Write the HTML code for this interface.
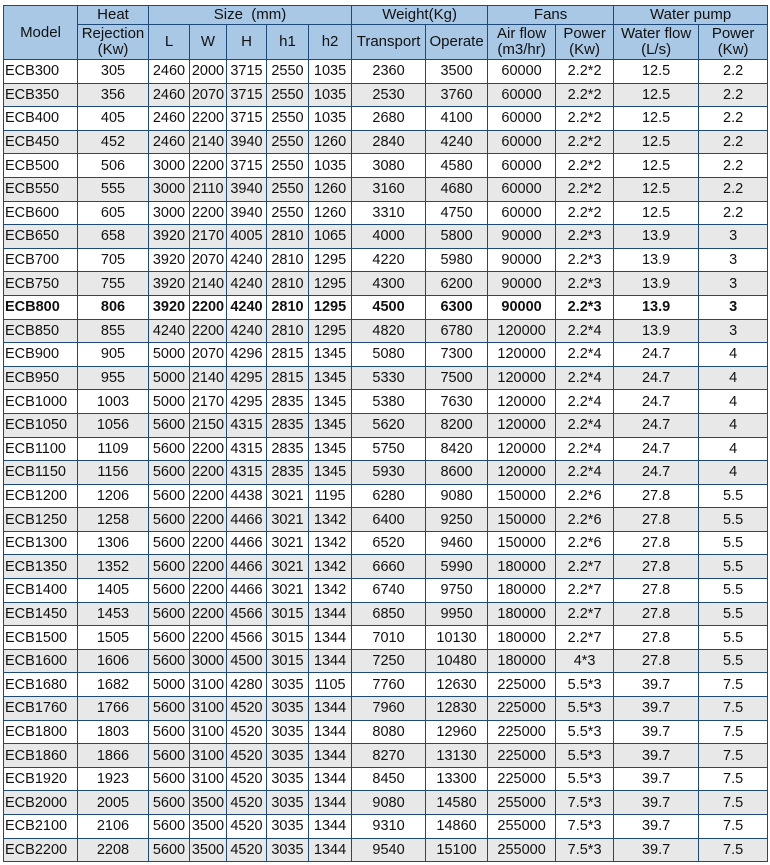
<!DOCTYPE html>
<html><head><meta charset="utf-8"><style>
html,body{margin:0;padding:0;background:#fff;width:770px;height:865px;overflow:hidden}
table{position:absolute;left:3px;top:5px;border-collapse:collapse;table-layout:fixed;width:765px;font-family:"Liberation Sans",Arial,sans-serif;font-size:14.5px;color:#111}
td,th{border:1px solid #1f4a78;padding:0;text-align:center;white-space:nowrap;overflow:hidden;font-weight:normal;line-height:16px}
th{background:#a9c8e6;font-size:15px;line-height:16px}
tr.d td{height:22.6px}
tr.g td{background:#e8e8e8}
td.m{text-align:left;padding-left:1px}
tr.b td{font-weight:bold}
</style></head><body>
<table>
<colgroup><col style="width:74px"><col style="width:71px"><col style="width:41px"><col style="width:37px"><col style="width:40px"><col style="width:42px"><col style="width:43px"><col style="width:74px"><col style="width:62px"><col style="width:68px"><col style="width:58px"><col style="width:85px"><col style="width:69px"></colgroup>
<tr style="height:19px"><th rowspan="2">Model</th><th>Heat</th><th colspan="5">Size &nbsp;(mm)</th><th colspan="2">Weight(Kg)</th><th colspan="2">Fans</th><th colspan="2">Water pump</th></tr>
<tr style="height:35px"><th>Rejection<br>(Kw)</th><th>L</th><th>W</th><th>H</th><th>h1</th><th>h2</th><th>Transport</th><th>Operate</th><th>Air flow<br>(m3/hr)</th><th>Power<br>(Kw)</th><th>Water flow<br>(L/s)</th><th>Power<br>(Kw)</th></tr>
<tr class="d"><td class="m">ECB300</td><td>305</td><td>2460</td><td>2000</td><td>3715</td><td>2550</td><td>1035</td><td>2360</td><td>3500</td><td>60000</td><td>2.2*2</td><td>12.5</td><td>2.2</td></tr>
<tr class="d g"><td class="m">ECB350</td><td>356</td><td>2460</td><td>2070</td><td>3715</td><td>2550</td><td>1035</td><td>2530</td><td>3760</td><td>60000</td><td>2.2*2</td><td>12.5</td><td>2.2</td></tr>
<tr class="d"><td class="m">ECB400</td><td>405</td><td>2460</td><td>2200</td><td>3715</td><td>2550</td><td>1035</td><td>2680</td><td>4100</td><td>60000</td><td>2.2*2</td><td>12.5</td><td>2.2</td></tr>
<tr class="d g"><td class="m">ECB450</td><td>452</td><td>2460</td><td>2140</td><td>3940</td><td>2550</td><td>1260</td><td>2840</td><td>4240</td><td>60000</td><td>2.2*2</td><td>12.5</td><td>2.2</td></tr>
<tr class="d"><td class="m">ECB500</td><td>506</td><td>3000</td><td>2200</td><td>3715</td><td>2550</td><td>1035</td><td>3080</td><td>4580</td><td>60000</td><td>2.2*2</td><td>12.5</td><td>2.2</td></tr>
<tr class="d g"><td class="m">ECB550</td><td>555</td><td>3000</td><td>2110</td><td>3940</td><td>2550</td><td>1260</td><td>3160</td><td>4680</td><td>60000</td><td>2.2*2</td><td>12.5</td><td>2.2</td></tr>
<tr class="d"><td class="m">ECB600</td><td>605</td><td>3000</td><td>2200</td><td>3940</td><td>2550</td><td>1260</td><td>3310</td><td>4750</td><td>60000</td><td>2.2*2</td><td>12.5</td><td>2.2</td></tr>
<tr class="d g"><td class="m">ECB650</td><td>658</td><td>3920</td><td>2170</td><td>4005</td><td>2810</td><td>1065</td><td>4000</td><td>5800</td><td>90000</td><td>2.2*3</td><td>13.9</td><td>3</td></tr>
<tr class="d"><td class="m">ECB700</td><td>705</td><td>3920</td><td>2070</td><td>4240</td><td>2810</td><td>1295</td><td>4220</td><td>5980</td><td>90000</td><td>2.2*3</td><td>13.9</td><td>3</td></tr>
<tr class="d g"><td class="m">ECB750</td><td>755</td><td>3920</td><td>2140</td><td>4240</td><td>2810</td><td>1295</td><td>4300</td><td>6200</td><td>90000</td><td>2.2*3</td><td>13.9</td><td>3</td></tr>
<tr class="d b"><td class="m">ECB800</td><td>806</td><td>3920</td><td>2200</td><td>4240</td><td>2810</td><td>1295</td><td>4500</td><td>6300</td><td>90000</td><td>2.2*3</td><td>13.9</td><td>3</td></tr>
<tr class="d g"><td class="m">ECB850</td><td>855</td><td>4240</td><td>2200</td><td>4240</td><td>2810</td><td>1295</td><td>4820</td><td>6780</td><td>120000</td><td>2.2*4</td><td>13.9</td><td>3</td></tr>
<tr class="d"><td class="m">ECB900</td><td>905</td><td>5000</td><td>2070</td><td>4296</td><td>2815</td><td>1345</td><td>5080</td><td>7300</td><td>120000</td><td>2.2*4</td><td>24.7</td><td>4</td></tr>
<tr class="d g"><td class="m">ECB950</td><td>955</td><td>5000</td><td>2140</td><td>4295</td><td>2815</td><td>1345</td><td>5330</td><td>7500</td><td>120000</td><td>2.2*4</td><td>24.7</td><td>4</td></tr>
<tr class="d"><td class="m">ECB1000</td><td>1003</td><td>5000</td><td>2170</td><td>4295</td><td>2835</td><td>1345</td><td>5380</td><td>7630</td><td>120000</td><td>2.2*4</td><td>24.7</td><td>4</td></tr>
<tr class="d g"><td class="m">ECB1050</td><td>1056</td><td>5600</td><td>2150</td><td>4315</td><td>2835</td><td>1345</td><td>5620</td><td>8200</td><td>120000</td><td>2.2*4</td><td>24.7</td><td>4</td></tr>
<tr class="d"><td class="m">ECB1100</td><td>1109</td><td>5600</td><td>2200</td><td>4315</td><td>2835</td><td>1345</td><td>5750</td><td>8420</td><td>120000</td><td>2.2*4</td><td>24.7</td><td>4</td></tr>
<tr class="d g"><td class="m">ECB1150</td><td>1156</td><td>5600</td><td>2200</td><td>4315</td><td>2835</td><td>1345</td><td>5930</td><td>8600</td><td>120000</td><td>2.2*4</td><td>24.7</td><td>4</td></tr>
<tr class="d"><td class="m">ECB1200</td><td>1206</td><td>5600</td><td>2200</td><td>4438</td><td>3021</td><td>1195</td><td>6280</td><td>9080</td><td>150000</td><td>2.2*6</td><td>27.8</td><td>5.5</td></tr>
<tr class="d g"><td class="m">ECB1250</td><td>1258</td><td>5600</td><td>2200</td><td>4466</td><td>3021</td><td>1342</td><td>6400</td><td>9250</td><td>150000</td><td>2.2*6</td><td>27.8</td><td>5.5</td></tr>
<tr class="d"><td class="m">ECB1300</td><td>1306</td><td>5600</td><td>2200</td><td>4466</td><td>3021</td><td>1342</td><td>6520</td><td>9460</td><td>150000</td><td>2.2*6</td><td>27.8</td><td>5.5</td></tr>
<tr class="d g"><td class="m">ECB1350</td><td>1352</td><td>5600</td><td>2200</td><td>4466</td><td>3021</td><td>1342</td><td>6660</td><td>5990</td><td>180000</td><td>2.2*7</td><td>27.8</td><td>5.5</td></tr>
<tr class="d"><td class="m">ECB1400</td><td>1405</td><td>5600</td><td>2200</td><td>4466</td><td>3021</td><td>1342</td><td>6740</td><td>9750</td><td>180000</td><td>2.2*7</td><td>27.8</td><td>5.5</td></tr>
<tr class="d g"><td class="m">ECB1450</td><td>1453</td><td>5600</td><td>2200</td><td>4566</td><td>3015</td><td>1344</td><td>6850</td><td>9950</td><td>180000</td><td>2.2*7</td><td>27.8</td><td>5.5</td></tr>
<tr class="d"><td class="m">ECB1500</td><td>1505</td><td>5600</td><td>2200</td><td>4566</td><td>3015</td><td>1344</td><td>7010</td><td>10130</td><td>180000</td><td>2.2*7</td><td>27.8</td><td>5.5</td></tr>
<tr class="d g"><td class="m">ECB1600</td><td>1606</td><td>5600</td><td>3000</td><td>4500</td><td>3015</td><td>1344</td><td>7250</td><td>10480</td><td>180000</td><td>4*3</td><td>27.8</td><td>5.5</td></tr>
<tr class="d"><td class="m">ECB1680</td><td>1682</td><td>5000</td><td>3100</td><td>4280</td><td>3035</td><td>1105</td><td>7760</td><td>12630</td><td>225000</td><td>5.5*3</td><td>39.7</td><td>7.5</td></tr>
<tr class="d g"><td class="m">ECB1760</td><td>1766</td><td>5600</td><td>3100</td><td>4520</td><td>3035</td><td>1344</td><td>7960</td><td>12830</td><td>225000</td><td>5.5*3</td><td>39.7</td><td>7.5</td></tr>
<tr class="d"><td class="m">ECB1800</td><td>1803</td><td>5600</td><td>3100</td><td>4520</td><td>3035</td><td>1344</td><td>8080</td><td>12960</td><td>225000</td><td>5.5*3</td><td>39.7</td><td>7.5</td></tr>
<tr class="d g"><td class="m">ECB1860</td><td>1866</td><td>5600</td><td>3100</td><td>4520</td><td>3035</td><td>1344</td><td>8270</td><td>13130</td><td>225000</td><td>5.5*3</td><td>39.7</td><td>7.5</td></tr>
<tr class="d"><td class="m">ECB1920</td><td>1923</td><td>5600</td><td>3100</td><td>4520</td><td>3035</td><td>1344</td><td>8450</td><td>13300</td><td>225000</td><td>5.5*3</td><td>39.7</td><td>7.5</td></tr>
<tr class="d g"><td class="m">ECB2000</td><td>2005</td><td>5600</td><td>3500</td><td>4520</td><td>3035</td><td>1344</td><td>9080</td><td>14580</td><td>255000</td><td>7.5*3</td><td>39.7</td><td>7.5</td></tr>
<tr class="d"><td class="m">ECB2100</td><td>2106</td><td>5600</td><td>3500</td><td>4520</td><td>3035</td><td>1344</td><td>9310</td><td>14860</td><td>255000</td><td>7.5*3</td><td>39.7</td><td>7.5</td></tr>
<tr class="d g"><td class="m">ECB2200</td><td>2208</td><td>5600</td><td>3500</td><td>4520</td><td>3035</td><td>1344</td><td>9540</td><td>15100</td><td>255000</td><td>7.5*3</td><td>39.7</td><td>7.5</td></tr>
</table>
</body></html>
